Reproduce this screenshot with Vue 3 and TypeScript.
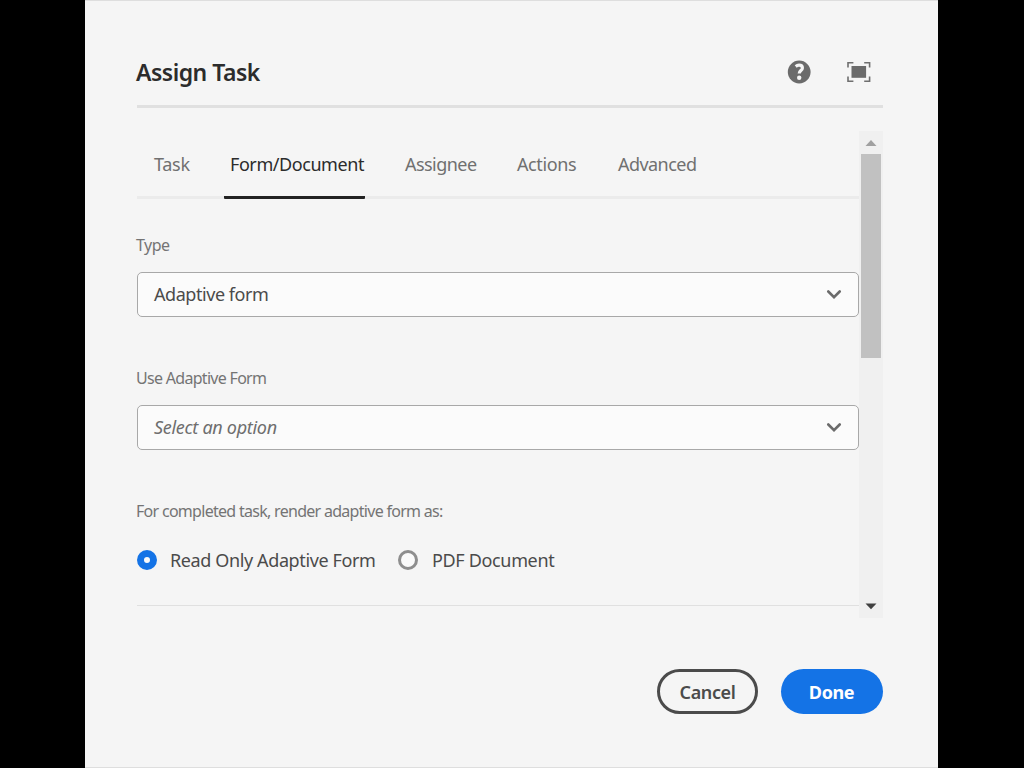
<script setup lang="ts">
import { ref } from 'vue'

interface Tab {
  id: string
  label: string
}

const tabs: Tab[] = [
  { id: 'task', label: 'Task' },
  { id: 'form', label: 'Form/Document' },
  { id: 'assignee', label: 'Assignee' },
  { id: 'actions', label: 'Actions' },
  { id: 'advanced', label: 'Advanced' },
]
const activeTab = ref('form')
const renderAs = ref('readonly')
</script>

<template>
  <div class="screen">
    <section class="dialog" role="dialog">
      <header class="header">
        <h1 class="title">Assign Task</h1>
        <svg class="help" viewBox="0 0 24 24">
          <circle cx="12.200" cy="12" r="11.400" fill="#6b6b6b" />
          <path d="M8.700 6.400c1-.8 2.100-1.200 3.300-1.200 2.200 0 3.400 1.100 3.400 2.700 0 2.600-3.200 2.700-3.200 5.600" fill="none" stroke="#f5f5f5" stroke-width="3.200" />
          <circle cx="12.200" cy="17.700" r="2.200" fill="#f5f5f5" />
        </svg>
        <svg class="full" viewBox="0 0 24 22">
          <rect x="4.500" y="5" width="14.600" height="11.800" fill="#6b6b6b" />
          <path d="M1 6.400V1.800H6.400M17.200 1.800H22.600V6.400M22.600 15.600V20.200H17.200M6.400 20.200H1V15.600" fill="none" stroke="#6f6f6f" stroke-width="1.600" />
        </svg>
      </header>

      <div class="body">
        <div class="content">
          <nav class="tabs">
            <button
              v-for="t in tabs"
              :key="t.id"
              :class="['tab', t.id, { active: t.id === activeTab }]"
              @click="activeTab = t.id"
            ><span>{{ t.label }}</span></button>
          </nav>

          <div class="field">
            <div class="label">Type</div>
            <div class="select">
              <span class="value">Adaptive form</span>
              <svg class="chevron" viewBox="0 0 16 10"><path d="M2.300 1.500 8 7.100 13.700 1.500" /></svg>
            </div>
          </div>

          <div class="field">
            <div class="label use-label">Use Adaptive Form</div>
            <div class="select">
              <span class="value placeholder">Select an option</span>
              <svg class="chevron" viewBox="0 0 16 10"><path d="M2.300 1.500 8 7.100 13.700 1.500" /></svg>
            </div>
          </div>

          <div class="label render-label">For completed task, render adaptive form as:</div>
          <div class="radios">
            <div class="radio first" @click="renderAs = 'readonly'">
              <i :class="['dot', { on: renderAs === 'readonly' }]"></i><span>Read Only Adaptive Form</span>
            </div>
            <div class="radio" @click="renderAs = 'pdf'">
              <i :class="['dot', { on: renderAs === 'pdf' }]"></i><span>PDF Document</span>
            </div>
          </div>
        </div>
        <div class="scrollbar">
          <svg class="arrow" viewBox="0 0 24 23"><path d="M6.500 15 12 9 17.500 15Z" fill="#a0a0a0" /></svg>
          <div class="thumb"></div>
          <svg class="arrow" viewBox="0 0 24 23"><path d="M6.500 8.500H17.500L12 14.300Z" fill="#404040" /></svg>
        </div>
      </div>

      <footer class="footer">
        <button class="btn cancel"><span>Cancel</span></button>
        <button class="btn done"><span>Done</span></button>
      </footer>
    </section>
  </div>
</template>

<style>
body {
  margin: 0;
  background: #000;
}
</style>

<style scoped>
.screen {
  width: 1024px;
  height: 768px;
  background: #000;
  padding: 0 86px 0 85px;
  box-sizing: border-box;
  overflow: hidden;
  font-family: 'Noto Sans', 'Open Sans', sans-serif;
  font-size: 18px;
  color: #4b4b4b;
  white-space: nowrap;
}
button {
  font: inherit;
  border: 0;
  background: none;
  padding: 0;
}
.dialog {
  box-sizing: border-box;
  height: 768px;
  background: #f5f5f5;
  border-top: 1px solid #dedede;
  border-bottom: 1px solid #dedede;
  padding: 0 55px 0 52px;
}
.header {
  display: flex;
  align-items: center;
  box-sizing: border-box;
  height: 107px;
  padding-top: 37px;
  border-bottom: 3px solid #e0e0e0;
}
.title {
  margin: 0 auto 0 -1px;
  font-size: 23px;
  font-weight: 600;
  line-height: 32px;
  letter-spacing: -0.5px;
  color: #2c2c2c;
}
.help {
  width: 24px;
  height: 24px;
  margin-right: 36px;
}
.full {
  width: 24px;
  height: 22px;
  margin-right: 12px;
}
.body {
  display: flex;
  margin-top: 23px;
  height: 487px;
}
.content {
  width: 722px;
  height: 475px;
  box-sizing: border-box;
  border-bottom: 1px solid #e0e0e0;
}
.tabs {
  display: flex;
  box-sizing: border-box;
  height: 68px;
  padding-left: 11px;
  border-bottom: 3px solid #ebebeb;
}
.tab {
  box-sizing: border-box;
  height: 68px;
  color: #707070;
  text-align: left;
  padding: 0 0 0 6px;
  border-bottom: 3px solid transparent;
}
.tab span {
  display: block;
  line-height: 24px;
}
.tab.active {
  color: #2c2c2c;
  border-bottom-color: #222;
  border-radius: 1px;
}
.task { width: 76px; letter-spacing: -0.3px; }
.form { width: 141px; letter-spacing: -0.43px; }
.assignee { width: 71px; margin-left: 34px; letter-spacing: -0.55px; }
.actions { width: 60px; margin-left: 41px; letter-spacing: -0.4px; }
.advanced { width: 79px; margin-left: 41px; letter-spacing: -0.55px; }
.field {
  height: 133px;
}
.label {
  font-size: 16px;
  line-height: 22px;
  color: #747474;
  letter-spacing: -0.5px;
  margin-left: -1px;
}
.use-label {
  letter-spacing: -0.7px;
}
.field .label {
  padding-top: 35px;
  height: 38px;
}
.select {
  display: flex;
  align-items: center;
  justify-content: space-between;
  box-sizing: border-box;
  height: 45px;
  border: 1px solid #a8a8a8;
  border-radius: 5px;
  background: #fbfbfb;
  padding: 0 16px;
}
.value {
  letter-spacing: -0.45px;
  padding-bottom: 2px;
}
.placeholder {
  font-style: italic;
  letter-spacing: -0.3px;
  color: #6e6e6e;
}
.chevron {
  width: 16px;
  height: 10px;
}
.chevron path {
  fill: none;
  stroke: #6b6b6b;
  stroke-width: 2.600;
  stroke-linecap: round;
}
.render-label {
  padding-top: 35px;
  letter-spacing: -0.71px;
}
.radios {
  display: flex;
  align-items: center;
  margin-top: 24px;
  height: 28px;
}
.radio {
  display: flex;
  align-items: center;
  letter-spacing: -0.34px;
}
.first {
  width: 261px;
  letter-spacing: -0.38px;
}
.dot {
  box-sizing: border-box;
  width: 20px;
  height: 20px;
  border: 3px solid #8e8e8e;
  border-radius: 50%;
  margin-right: 14px;
  background: #fafafa;
}
.first .dot {
  margin-right: 13px;
}
.dot.on {
  border: 7px solid #1473e6;
}
.scrollbar {
  display: flex;
  flex-direction: column;
  width: 24px;
  background: #f0f0f0;
}
.arrow {
  display: block;
  width: 24px;
  height: 23px;
}
.thumb {
  width: 20px;
  height: 204px;
  margin: 0 2px auto;
  background: #c1c1c1;
}
.footer {
  display: flex;
  justify-content: flex-end;
  gap: 23px;
  margin-top: 51px;
}
.btn {
  box-sizing: border-box;
  height: 45px;
  width: 101px;
  border-radius: 23px;
  font-weight: 600;
  letter-spacing: -0.4px;
  text-align: center;
}
.cancel {
  border: 3px solid #4b4b4b;
  color: #4b4b4b;
}
.done {
  width: 102px;
  padding-right: 1px;
  font-weight: 700;
  background: #1473e6;
  color: #fff;
}
</style>
